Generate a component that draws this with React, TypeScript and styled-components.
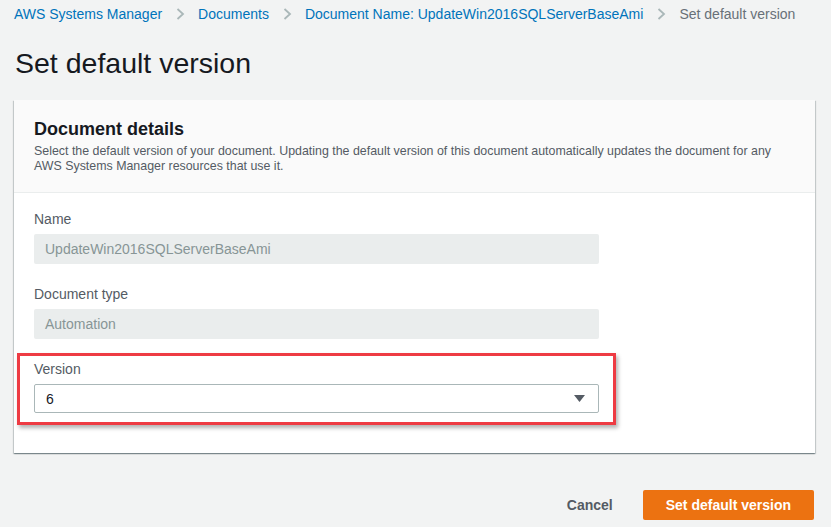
import React from "react";
import styled, { createGlobalStyle } from "styled-components";

const GlobalStyle = createGlobalStyle`
  html, body {
    margin: 0;
    padding: 0;
    background: #f2f3f3;
    font-family: "Liberation Sans", Arial, sans-serif;
    color: #16191f;
  }
  * { box-sizing: border-box; }
`;

const Page = styled.div`
  padding: 4px 16px 0 14px;
  min-height: 527px;
`;

const Breadcrumbs = styled.nav`
  display: flex;
  align-items: center;
  height: 20px;
  font-size: 14px;
  line-height: 20px;
  white-space: nowrap;
`;

const Crumb = styled.span<{ $current?: boolean }>`
  color: ${(p) => (p.$current ? "#687078" : "#0073bb")};
`;

const Sep = styled.span`
  display: inline-flex;
  align-items: center;
  margin: 0 13px 0 14px;
  height: 20px;
`;

const Title = styled.h1`
  margin: 21px 0 0 1px;
  font-size: 28.5px;
  line-height: 36px;
  font-weight: 400;
  color: #16191f;
`;

const Card = styled.section`
  margin-top: 19px;
  background: #fff;
  box-shadow: 0 1px 1px 0 rgba(0, 28, 36, 0.3), 1px 1px 1px 0 rgba(0, 28, 36, 0.15),
    -1px 1px 1px 0 rgba(0, 28, 36, 0.15);
`;

const CardHeader = styled.header`
  background: #fafafa;
  border-bottom: 1px solid #eaeded;
  padding: 17px 20px 18px 20px;
`;

const CardTitle = styled.h2`
  margin: 0;
  font-size: 18px;
  line-height: 24px;
  font-weight: 700;
  color: #16191f;
`;

const CardDesc = styled.p`
  margin: 3px 0 0 0;
  max-width: 750px;
  font-size: 12.4px;
  line-height: 15px;
  color: #545b64;
`;

const CardBody = styled.div`
  padding: 16px 20px 40px 20px;
  display: flex;
  flex-direction: column;
  gap: 20px;
`;

const Field = styled.div`
  position: relative;
  width: 565px;
  display: flex;
  flex-direction: column;
  gap: 5px;
`;

const Label = styled.label`
  font-size: 14px;
  line-height: 20px;
  color: #545b64;
`;

const DisabledInput = styled.div`
  height: 30px;
  border-radius: 2px;
  background: #eaeded;
  color: #879596;
  font-size: 14px;
  line-height: 30px;
  padding: 0 11px;
`;

const Select = styled.div`
  height: 29px;
  border: 1px solid #aab7b8;
  border-radius: 2px;
  background: #fff;
  color: #16191f;
  font-size: 14px;
  display: flex;
  align-items: center;
  justify-content: space-between;
  padding: 0 13px 0 11px;
`;

const Highlight = styled.div`
  position: absolute;
  top: -6px;
  bottom: -12px;
  left: -17px;
  right: -17px;
  border: 3px solid #ee3b43;
  box-shadow: 2px 3px 4px rgba(0, 0, 0, 0.3);
  pointer-events: none;
`;

const Actions = styled.div`
  display: flex;
  justify-content: flex-end;
  align-items: center;
  gap: 10px;
  margin-top: 37px;
  margin-right: 1px;
`;

const TextButton = styled.button`
  border: none;
  background: transparent;
  font-family: inherit;
  font-size: 14px;
  font-weight: 700;
  color: #545b64;
  padding: 0 20px;
  height: 30px;
`;

const PrimaryButton = styled.button`
  border: none;
  border-radius: 2px;
  background: #ec7211;
  color: #fff;
  font-family: inherit;
  font-size: 14px;
  font-weight: 700;
  padding: 0 23px;
  height: 30px;
`;

const Chevron = () => (
  <svg width="9" height="12" viewBox="0 0 9 12">
    <path d="M1.5 1 L7 6 L1.5 11" fill="none" stroke="#aab7b8" strokeWidth="1.8" />
  </svg>
);

const Caret = () => (
  <svg width="11" height="7" viewBox="0 0 11 7">
    <path d="M0 0 H11 L5.5 7 Z" fill="#545b64" />
  </svg>
);

export default function App() {
  return (
    <>
      <GlobalStyle />
      <Page>
        <Breadcrumbs>
          <Crumb>AWS Systems Manager</Crumb>
          <Sep><Chevron /></Sep>
          <Crumb>Documents</Crumb>
          <Sep><Chevron /></Sep>
          <Crumb>Document Name: UpdateWin2016SQLServerBaseAmi</Crumb>
          <Sep><Chevron /></Sep>
          <Crumb $current>Set default version</Crumb>
        </Breadcrumbs>
        <Title>Set default version</Title>
        <Card>
          <CardHeader>
            <CardTitle>Document details</CardTitle>
            <CardDesc>
              Select the default version of your document. Updating the default version of this document automatically updates the document for any AWS Systems Manager resources that use it.
            </CardDesc>
          </CardHeader>
          <CardBody>
            <Field>
              <Label>Name</Label>
              <DisabledInput>UpdateWin2016SQLServerBaseAmi</DisabledInput>
            </Field>
            <Field>
              <Label>Document type</Label>
              <DisabledInput>Automation</DisabledInput>
            </Field>
            <Field>
              <Label>Version</Label>
              <Select>
                <span>6</span>
                <Caret />
              </Select>
              <Highlight />
            </Field>
          </CardBody>
        </Card>
        <Actions>
          <TextButton>Cancel</TextButton>
          <PrimaryButton>Set default version</PrimaryButton>
        </Actions>
      </Page>
    </>
  );
}
